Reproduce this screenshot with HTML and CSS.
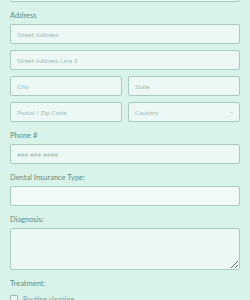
FILE: index.html
```html
<!DOCTYPE html>
<html lang="en">
<head>
    <meta charset="UTF-8">
    <meta name="viewport" content="width=device-width, initial-scale=1.0">
    <title>Patient Form</title>
    <link rel="stylesheet" href="styles.css">
</head>
<body>

    <form class="form">
        <div class="field field-top">
            <input type="text" class="input">
        </div>

        <div class="field">
            <label class="label">Address</label>
            <div class="stack">
                <input type="text" class="input" placeholder="Street Address">
                <input type="text" class="input" placeholder="Street Address Line 2">
                <div class="row">
                    <input type="text" class="input" placeholder="City">
                    <input type="text" class="input" placeholder="State">
                </div>
                <div class="row">
                    <input type="text" class="input" placeholder="Postal / Zip Code">
                    <div class="select">
                        <span>Country</span>
                        <span class="arrow">&#8211;</span>
                    </div>
                </div>
            </div>
        </div>

        <div class="field">
            <label class="label">Phone #</label>
            <input type="text" class="input" placeholder="### ### ####">
        </div>

        <div class="field">
            <label class="label">Dental Insurance Type:</label>
            <input type="text" class="input input-white">
        </div>

        <div class="field">
            <label class="label">Diagnosis:</label>
            <textarea class="input textarea"></textarea>
        </div>

        <div class="field">
            <label class="label">Treatment:</label>
            <div class="check">
                <span class="box"></span>
                <span class="check-text">Routine cleaning</span>
            </div>
        </div>
    </form>

</body>
</html>
```

FILE: styles.css
```css
* {
    margin: 0;
    padding: 0;
    box-sizing: border-box;
}

body {
    font-family: Lato, "Open Sans", sans-serif;
    background: #d9f3eb;
    color: #4f7d6e;
    padding: 0 10px;
    overflow: hidden;
}

.form {
    display: flex;
    flex-direction: column;
}

.field {
    margin-top: 9px;
}

.field-top {
    margin-top: -18px;
}

.label {
    display: block;
    font-size: 7.5px;
    line-height: 10px;
    margin-bottom: 3px;
    color: #628d7e;
}

.stack {
    display: flex;
    flex-direction: column;
    gap: 6px;
}

.row {
    display: flex;
    gap: 6px;
}

.row > * {
    flex: 1;
    min-width: 0;
}

/* campos de texto */
.input {
    display: block;
    width: 100%;
    height: 20px;
    padding: 0 6px;
    font-family: inherit;
    font-size: 6.5px;
    color: #4f7d6e;
    background: #ebf8f5;
    border: 1px solid #a9cbbf;
    border-radius: 2px;
    outline: none;
}

.input::placeholder {
    color: #a6bdb5;
}

.input-white {
    background: #f3fbf9;
}

.textarea {
    height: 42px;
    resize: vertical;
}

.select {
    display: flex;
    align-items: center;
    justify-content: space-between;
    height: 20px;
    padding: 0 6px;
    font-size: 6.5px;
    color: #a6bdb5;
    background: #ebf8f5;
    border: 1px solid #a9cbbf;
    border-radius: 2px;
}

.arrow {
    font-size: 5px;
    color: #9ab3aa;
}

.check {
    display: flex;
    align-items: center;
    gap: 5px;
    margin-top: 6px;
}

.box {
    width: 8px;
    height: 8px;
    border: 1px solid #9fbfb3;
    background: #ebf8f5;
    border-radius: 1px;
}

.check-text {
    font-size: 7px;
    color: #7fa093;
}
```
